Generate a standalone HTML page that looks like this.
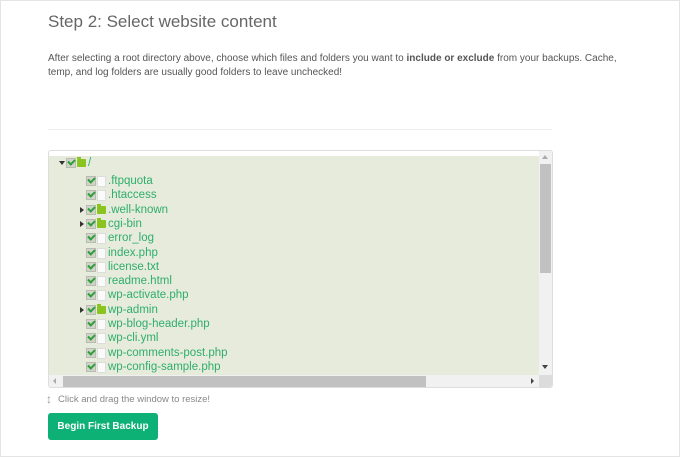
<!DOCTYPE html>
<html><head><style>
body{margin:0;width:680px;height:457px;background:#fff;font-family:"Liberation Sans",sans-serif;position:relative;overflow:hidden}
.frame{position:absolute;left:0;top:0;width:678px;height:455px;border:1px solid #e4e4e4}
h2{position:absolute;left:48px;top:12px;margin:0;font-weight:normal;font-size:17px;color:#666}
p{position:absolute;left:48px;top:52px;margin:0;width:620px;font-size:10px;line-height:14px;color:#555;white-space:nowrap}
.sep{position:absolute;left:48px;top:129px;width:504px;height:1px;background:#eee}
.box{position:absolute;left:48px;top:150px;width:503px;height:236px;border:1px solid #ddd;border-radius:3px;background:#fff;overflow:hidden}
.inner{position:absolute;left:0;top:5px;width:490px;height:219px;background:#e7ebdc}
.vs{position:absolute;left:490px;top:0;width:13px;height:224px;background:#f1f1f1}
.vt{position:absolute;left:491px;top:13px;width:11px;height:109px;background:#c1c1c1}
.hs{position:absolute;left:0;top:224px;width:490px;height:12px;background:#f1f1f1}
.ht{position:absolute;left:14px;top:225px;width:363px;height:11px;background:#c1c1c1}
.corner{position:absolute;left:490px;top:224px;width:13px;height:12px;background:#dcdcdc}
.row{position:absolute;height:14px;font-size:11.5px;color:#2eae6b;line-height:14px;white-space:nowrap}
.tri{position:absolute;width:0;height:0;border-top:3px solid transparent;border-bottom:3px solid transparent;border-left:4px solid #333;top:4px}
.cb{position:absolute;top:2px;width:8px;height:8px;background:#cfd3c8;border:1px solid #b8bcb0}
.cb:after{content:"";position:absolute;left:1px;top:0px;width:5px;height:3px;border-left:2px solid #2e9e3a;border-bottom:2px solid #2e9e3a;transform:rotate(-45deg)}
.fi{position:absolute;top:2px;width:7px;height:9px;background:#fafafa;border:1px solid #ddd}
.fo{position:absolute;top:3px;width:9px;height:8px;background:#8bc31f;border-radius:1px}
.fo:before{content:"";position:absolute;left:0;top:-2px;width:4px;height:2px;background:#8bc31f}
.t{position:absolute}
.btn{position:absolute;left:48px;top:413px;width:110px;height:27px;background:#0db075;border-radius:3px;color:#fff;font-weight:bold;font-size:10px;line-height:27px;text-align:center}
.note{position:absolute;left:58px;top:394px;font-size:9.5px;color:#888}
</style></head><body>
<div class="frame"></div>
<h2>Step 2: Select website content</h2>
<p>After selecting a root directory above, choose which files and folders you want to <b>include or exclude</b> from your backups. Cache,<br>temp, and log folders are usually good folders to leave unchecked!</p>
<div class="sep"></div>
<div class="box">
<div class="inner">
<div class="row" style="left:0;top:0"><div class="tri" style="left:10px;top:5px;border-left:3px solid transparent;border-right:3px solid transparent;border-top:4px solid #333;border-bottom:0"></div><div class="cb" style="left:17px"></div><div class="fo" style="left:28px"></div><span class="t" style="left:39px">/</span></div>
</div>
<div id="rows"></div>
<div class="vs"></div><div class="vt"></div>
<div style="position:absolute;left:493px;top:4px;border-left:3px solid transparent;border-right:3px solid transparent;border-bottom:4px solid #aaa"></div>
<div style="position:absolute;left:493px;top:214px;border-left:3px solid transparent;border-right:3px solid transparent;border-top:4px solid #444"></div>
<div class="hs"></div><div class="ht"></div>
<div style="position:absolute;left:4px;top:227px;border-top:3px solid transparent;border-bottom:3px solid transparent;border-right:3px solid #aaa"></div>
<div style="position:absolute;left:482px;top:227px;border-top:3px solid transparent;border-bottom:3px solid transparent;border-left:3px solid #444"></div>
<div class="corner"></div>
</div>
<script>
var items=[[".ftpquota",0,0],[".htaccess",0,0],[".well-known",1,1],["cgi-bin",1,1],["error_log",0,0],["index.php",0,0],["license.txt",0,0],["readme.html",0,0],["wp-activate.php",0,0],["wp-admin",1,1],["wp-blog-header.php",0,0],["wp-cli.yml",0,0],["wp-comments-post.php",0,0],["wp-config-sample.php",0,0]];
var h="";items.forEach(function(it,i){var top=23+i*14.3;h+='<div class="row" style="left:0;top:'+top+'px">'+(it[2]?'<div class="tri" style="left:31px"></div>':'')+'<div class="cb" style="left:37px"></div>'+(it[1]?'<div class="fo" style="left:48px"></div>':'<div class="fi" style="left:48px"></div>')+'<span class="t" style="left:59px">'+it[0]+'</span></div>';});
document.getElementById("rows").outerHTML=h;
</script>
<div style="position:absolute;left:46px;top:392px;font-size:12px;color:#999">↕</div>
<div class="note">Click and drag the window to resize!</div>
<div class="btn">Begin First Backup</div>
</body></html>
